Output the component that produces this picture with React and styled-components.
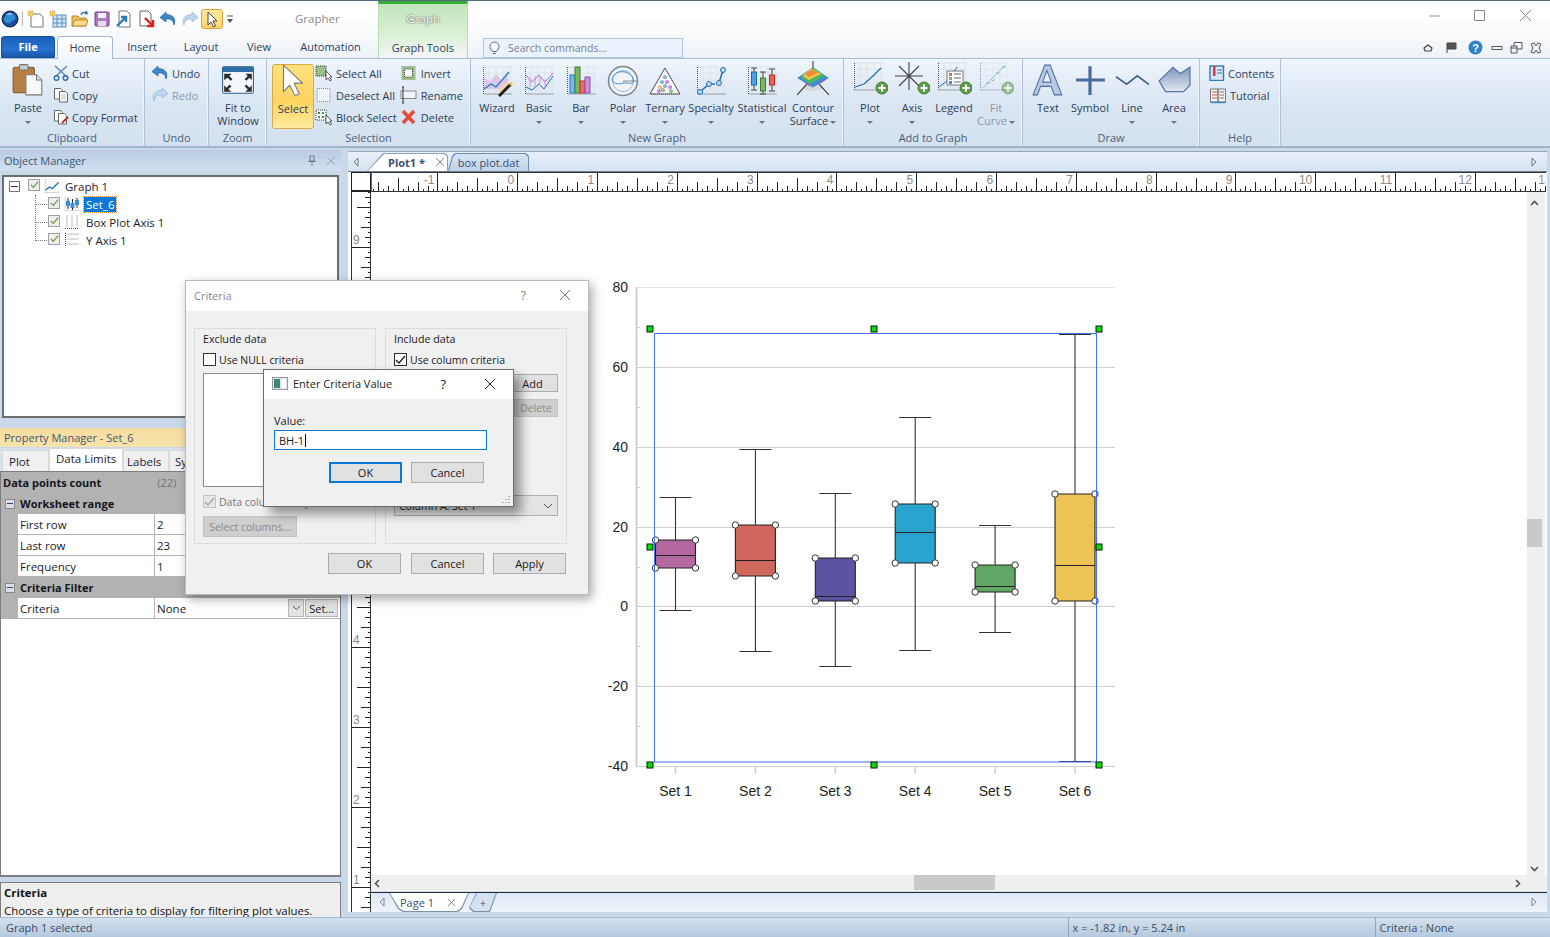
import React from 'react';
import styled, { createGlobalStyle } from 'styled-components';

const GlobalStyle = createGlobalStyle`
  html, body { margin: 0; padding: 0; background: #25343f; }
  body { font-family: "Open Sans", "Noto Sans", sans-serif; font-size: 11px; color: #2c3e58; }
  * { box-sizing: border-box; }
  svg { display: block; flex: none; }
`;

const Page = styled.div`
  width: 1550px;
  height: 937px;
  display: flex;
  flex-direction: column;
  overflow: hidden;
  position: relative;
  background: #c9d9ea;
  border-top: 1px solid #54697a;
`;

/* ---------- header ---------- */
const Header = styled.div`
  display: grid;
  grid-template-columns: 378px 90px 1fr;
  grid-template-rows: 36px 21px;
  background: linear-gradient(#fff 0, #fff 16px, #eef2f7 57px);
`;
const TitleLeft = styled.div`
  display: flex;
  align-items: center;
  padding-left: 2px;
`;
const QatSlot = styled.div`
  width: ${p => p.$w || 22}px;
  height: 20px;
  flex: none;
  display: flex;
  align-items: center;
  justify-content: center;
  border-radius: 3px;
  ${p => p.$on && 'background: linear-gradient(#ffe9a0, #fdd36b); border: 1px solid #d6a23c;'}
`;
const QatSep = styled.div`
  width: 1px;
  height: 14px;
  background: #b5b5b5;
  margin: 0 2px 0 4px;
`;
const AppTitle = styled.div`
  margin: -2px 0 0 58px;
  color: #8c8c8c;
  font-size: 11.5px;
`;
const ContextTab = styled.div`
  grid-row: 1 / span 2;
  grid-column: 2;
  border-top: 3px solid #39ab39;
  border-left: 1px solid #b9dcb5;
  border-right: 1px solid #b9dcb5;
  background: linear-gradient(#bfe6ba, #d8efd3 50%, #f3f6f6 100%);
  display: flex;
  flex-direction: column;
  align-items: center;
`;
const ContextTitle = styled.div`
  margin-top: 7px;
  color: #fff;
  text-shadow: 0 0 2px #555, 0 0 1px #777;
  font-size: 11.5px;
`;
const ContextName = styled.div`
  margin-top: 14px;
  color: #2c3e58;
  font-size: 11px;
`;
const WinControls = styled.div`
  grid-row: 1;
  grid-column: 3;
  display: flex;
  justify-content: flex-end;
  align-items: center;
  padding-right: 18.5px;
  gap: 32.5px;
  margin-top: -8px;
`;
const TabsRow = styled.div`
  grid-row: 2;
  grid-column: 1;
  display: flex;
  align-items: flex-end;
  padding-left: 1px;
`;
const FileTab = styled.div`
  width: 54px;
  height: 22px;
  flex: none;
  margin-right: 2px;
  padding-bottom: 1px;
  color: #fff;
  font-weight: 700;
  display: flex;
  align-items: center;
  justify-content: center;
  border-radius: 3px 3px 0 0;
  background: linear-gradient(#1a5fb8, #2573d2 60%, #1c56a8);
  border: 1px solid #1a4f9c;
`;
const RibbonTab = styled.div`
  height: 22px;
  flex: none;
  padding: 0 0 1px 0;
  width: ${p => p.$w}px;
  display: flex;
  align-items: center;
  justify-content: center;
  color: #2c3e58;
  font-size: 11px;
  ${p => p.$active && `
    background: linear-gradient(#fff, #f0f6fc);
    border: 1px solid #a4bad2;
    border-bottom: none;
    border-radius: 3px 3px 0 0;
    position: relative;
    top: 1px;
    height: 23px;
  `}
`;
const HeadRight = styled.div`
  grid-row: 2;
  grid-column: 3;
  display: flex;
  align-items: center;
  padding-left: 15px;
`;
const SearchBox = styled.div`
  width: 200px;
  height: 20px;
  margin-top: 1px;
  background: #eaf3fb;
  border: 1px solid #b4c8dd;
  display: flex;
  align-items: center;
  gap: 7px;
  padding-left: 4px;
  color: #77818e;
  font-size: 10.5px;
`;
const HelpIcons = styled.div`
  margin-left: auto;
  display: flex;
  align-items: center;
  padding-right: 8px;
`;
const Spacer = styled.span`
  width: ${p => p.$w}px;
  flex: none;
`;

/* ---------- ribbon ---------- */
const Ribbon = styled.div`
  height: 90px;
  display: flex;
  background: linear-gradient(#eff5fc, #d9e5f2 55%, #d4e1ef);
  border-top: 1px solid #a6bdd4;
  border-bottom: 2px solid #9fb5cc;
`;
const Group = styled.div`
  width: ${p => p.$w}px;
  flex: none;
  display: flex;
  flex-direction: column;
  border-right: 1px solid #aec2d8;
  box-shadow: inset -1px 0 0 #eef4fa;
`;
const GroupBody = styled.div`
  flex: 1;
  display: flex;
  padding: 5px 0 0 ${p => p.$pl || 4}px;
  gap: ${p => p.$gap || 0}px;
`;
const GroupLabel = styled.div`
  height: 17px;
  text-align: center;
  color: #4a5f7c;
  font-size: 11px;
  line-height: 17px;
`;
const LargeBtn = styled.div`
  width: ${p => p.$w || 42}px;
  height: 65px;
  flex: none;
  display: flex;
  flex-direction: column;
  align-items: center;
  color: ${p => p.$off ? '#8b99ab' : '#2c3e58'};
  line-height: 13px;
  text-align: center;
  white-space: nowrap;
  border-radius: 3px;
  ${p => p.$on && `
    background: linear-gradient(#ffe27f, #fdd35f 55%, #ffeb9d);
    border: 1px solid #d9aa45;
  `}
`;
const LargeIcon = styled.div`
  height: 33px;
  margin-bottom: 4px;
  display: flex;
  align-items: flex-end;
  justify-content: center;
`;
const Caret = styled.span`
  display: inline-block;
  width: 0;
  height: 0;
  vertical-align: middle;
  margin-left: ${p => p.$inline ? 2 : 0}px;
  border-left: 3px solid transparent;
  border-right: 3px solid transparent;
  border-top: 3px solid #69737f;
`;
const SmallCol = styled.div`
  display: flex;
  flex-direction: column;
  margin: -2px 0 0 ${p => p.$ml || 0}px;
`;
const SmallBtn = styled.div`
  height: 22px;
  display: flex;
  align-items: center;
  gap: 3px;
  white-space: nowrap;
  color: ${p => p.$off ? '#8b99ab' : '#2c3e58'};
  font-size: 11px;
`;

/* ---------- main ---------- */
const Main = styled.div`
  flex: 1;
  min-height: 0;
  display: flex;
`;
const LeftPanel = styled.div`
  width: 341px;
  flex: none;
  display: flex;
  flex-direction: column;
  padding-top: 2px;
`;
const PanelHeader = styled.div`
  height: ${p => p.$yellow ? 19 : 21}px;
  flex: none;
  display: flex;
  align-items: center;
  padding: 0 4px;
  color: #43566e;
  font-size: 11px;
  background: ${p => p.$yellow
    ? 'linear-gradient(#f4dd9f, #f8e3ae)'
    : 'linear-gradient(#b9cce4, #d2e0f1)'};
`;
const PanelTools = styled.div`
  margin-left: auto;
  display: flex;
  align-items: center;
  gap: 9px;
  padding-right: 1px;
`;
const TreeBox = styled.div`
  height: 243px;
  flex: none;
  margin: 4px 0 10px 2px;
  width: 337px;
  background: #fff;
  border: 2px solid #6d6d6d;
  padding: 0 0 0 5px;
  font-size: 11.5px;
  color: #1c1c28;
`;
const TreeRow = styled.div`
  position: relative;
  height: 18px;
  display: flex;
  align-items: center;
  gap: 4px;
`;
const TreeChildren = styled.div`
  margin-left: 26px;
  padding-left: 12px;
  border-left: 1px dotted #777;
  height: 46px;
  margin-bottom: 8px;
  & > ${TreeRow}::before {
    content: '';
    position: absolute;
    left: -12px;
    top: 9px;
    width: 11px;
    border-top: 1px dotted #777;
  }
`;
const Expander = styled.div`
  width: 11px;
  height: 11px;
  margin-right: 4px;
  border: 1px solid #777;
  position: relative;
  &::after {
    content: '';
    position: absolute;
    left: 1px;
    right: 1px;
    top: 4px;
    border-top: 1px solid #333;
  }
`;
const TreeCheck = styled.div`
  width: 12px;
  height: 12px;
  margin-top: -3px;
  border: 1px solid #a1a1a1;
  background: #eee;
  display: flex;
  align-items: center;
  justify-content: center;
`;
const TreeLabel = styled.span`
  padding: 0 2px;
  margin-left: ${p => p.$ml || 0}px;
  ${p => p.$sel && 'background: #0a78d7; color: #fff; outline: 1px dotted #d58a20;'}
`;
const PropTabs = styled.div`
  height: 23px;
  flex: none;
  display: flex;
  align-items: flex-end;
  padding: 0 0 0 2px;
  margin-top: 1px;
  background: #d5e2f0;
`;
const PropTab = styled.div`
  height: ${p => p.$active ? 23 : 21}px;
  width: ${p => p.$w}px;
  flex: none;
  display: flex;
  align-items: ${p => p.$active ? 'flex-start' : 'center'};
  padding: ${p => p.$active ? 2 : 0}px 0 0 ${p => p.$pl}px;
  font-size: 11.5px;
  color: #1b2230;
  background: ${p => p.$active ? '#fff' : '#f0f0f0'};
  border: 1px solid #dadada;
  border-bottom: none;
`;
const PropGrid = styled.div`
  flex: 1;
  min-height: 0;
  background: #fff;
  border: 1px solid #7d7d7d;
  border-top-width: 1px;
  border-bottom-width: 2px;
  font-size: 11.5px;
  color: #1b1b24;
`;
const PropRow = styled.div`
  height: 21px;
  display: grid;
  grid-template-columns: 16px 136px 1fr;
  gap: 1px;
  background: #b2b2b2;
  padding-bottom: 1px;
`;
const PropHead = styled.div`
  height: 21px;
  display: flex;
  align-items: center;
  gap: 5px;
  padding-left: ${p => p.$pl ?? 4}px;
  background: #b2b2b2;
  font-weight: 700;
  color: #15151c;
  font-size: 11px;
`;
const HeadCount = styled.span`
  font-weight: 400;
  color: #747474;
  margin-left: 51px;
`;
const Minus = styled.span`
  width: 10px;
  height: 10px;
  border: 1px solid #888;
  background: #d8dfe8;
  position: relative;
  &::after {
    content: '';
    position: absolute;
    left: 1px;
    right: 1px;
    top: 3px;
    border-top: 1px solid #33435e;
  }
`;
const PropCell = styled.div`
  background: #fff;
  display: flex;
  align-items: center;
  padding-left: 2px;
`;
const Gutter = styled.div`
  background: #b2b2b2;
`;
const CellButton = styled.div`
  height: 18px;
  width: ${p => p.$w}px;
  flex: none;
  margin-left: ${p => p.$ml || 0}px;
  background: #e3e3e3;
  border: 1px solid #b8b8b8;
  display: flex;
  align-items: center;
  justify-content: center;
  font-size: 11px;
`;
const DescBox = styled.div`
  height: 35px;
  flex: none;
  margin-top: 5px;
  overflow: hidden;
  background: #efefef;
  border-top: 1px solid #7d7d7d;
  border-left: 1px solid #7d7d7d;
  border-right: 1px solid #7d7d7d;
  padding: 1px 3px;
  font-size: 11.4px;
  line-height: 18px;
  color: #111;
`;
const DescTitle = styled.div`
  font-weight: 700;
`;

/* ---------- workspace ---------- */
const Workspace = styled.div`
  flex: 1;
  min-width: 0;
  display: flex;
  flex-direction: column;
  margin: 3px 2px 5px 7px;
  background: #fff;
  border-top: 1px solid #93a9c2;
  border-right: 1px solid #d8d8d8;
`;
const DocTabs = styled.div`
  height: 20px;
  flex: none;
  display: flex;
  align-items: flex-end;
  padding-left: 1px;
  background: linear-gradient(#e8f0f9, #d6e3f1);
  border-bottom: 1px solid #6f8093;
`;
const ArrowBtn = styled.div`
  width: ${p => p.$w || 14}px;
  height: 18px;
  flex: none;
  display: flex;
  align-items: center;
  justify-content: center;
  margin-left: ${p => p.$auto ? 'auto' : 0};
  margin-right: ${p => p.$mr || 0}px;
`;
const Shaped = styled.div`
  position: relative;
  width: ${p => p.$w}px;
  height: ${p => p.$h || 18}px;
  flex: none;
  margin-left: ${p => p.$ml || 0}px;
  padding: 0 ${p => p.$pr || 0}px 0 ${p => p.$pl || 0}px;
  display: flex;
  align-items: center;
  justify-content: center;
  gap: ${p => p.$gap || 10}px;
  background: ${p => p.$line || '#8da4bd'};
  clip-path: ${p => p.$clip};
  color: #3d4f70;
  font-weight: ${p => p.$bold ? 700 : 400};
  font-size: 11px;
  &::before {
    content: '';
    position: absolute;
    inset: ${p => p.$inset || '1px 1px 0 1px'};
    background: ${p => p.$fill};
    clip-path: ${p => p.$clip};
  }
  & > * { position: relative; }
`;
const RulerRow = styled.div`
  height: 20px;
  flex: none;
  display: flex;
  padding-left: 3px;
`;
const RulerCorner = styled.div`
  width: 20px;
  height: 20px;
  flex: none;
  border: 1px solid #222;
  border-bottom-width: 2px;
`;
const CanvasRow = styled.div`
  flex: 1;
  min-height: 0;
  display: flex;
  padding-left: 3px;
`;
const CanvasCol = styled.div`
  flex: 1;
  min-width: 0;
  display: flex;
  flex-direction: column;
`;
const CanvasTop = styled.div`
  height: 683px;
  flex: none;
  display: flex;
`;
const VScroll = styled.div`
  width: 18px;
  background: #efefef;
  display: flex;
  flex-direction: column;
  align-items: flex-start;
  padding-top: 6px;
`;
const VThumb = styled.div`
  width: 15px;
  height: 28px;
  flex: none;
  margin: 311px 0 317px;
  background: #c9c9c9;
`;
const ScrollArrow = styled.div`
  width: 15px;
  height: 10px;
  flex: none;
  display: flex;
  align-items: center;
  justify-content: center;
`;
const HScroll = styled.div`
  height: 17px;
  flex: none;
  background: #efefef;
  display: flex;
  align-items: center;
  padding-left: 3px;
  border-bottom: 1px solid #ddd;
`;
const HThumb = styled.div`
  width: 81px;
  height: 15px;
  flex: none;
  margin-left: 534px;
  margin-right: 520px;
  align-self: flex-start;
  background: #c9c9c9;
`;
const PageTabs = styled.div`
  height: 20px;
  flex: none;
  display: flex;
  align-items: flex-start;
  padding-left: 3px;
  border-top: 1px solid #172a44;
  background: linear-gradient(#dfe9f5, #eef4fb);
`;

/* ---------- status ---------- */
const StatusBar = styled.div`
  height: 20px;
  flex: none;
  display: flex;
  align-items: center;
  padding-left: 6px;
  color: #3a4c66;
  font-size: 11px;
  background: linear-gradient(#d3e0ef, #b5c9de);
  border-top: 1px solid #a4b9d0;
`;
const StatusCell = styled.div`
  height: 100%;
  width: ${p => p.$w}px;
  margin-left: ${p => p.$ml || 0}px;
  display: flex;
  align-items: center;
  padding-left: 4px;
  border-left: 1px solid #94a9c0;
`;

/* ---------- dialogs ---------- */
const Dialog = styled.div`
  position: absolute;
  left: ${p => p.$x}px;
  top: ${p => p.$y}px;
  width: ${p => p.$w}px;
  height: ${p => p.$h}px;
  background: #f0f0f0;
  border: 1px solid ${p => p.$dark ? '#6d6d6d' : '#b9b9b9'};
  box-shadow: ${p => p.$dark ? '7px 7px 10px rgba(0,0,0,.4)' : '3px 4px 10px rgba(0,0,0,.35)'};
  font-size: 11px;
  color: #1a1a1a;
  display: flex;
  flex-direction: column;
`;
const DlgTitle = styled.div`
  height: ${p => p.$h}px;
  flex: none;
  background: #fff;
  display: flex;
  align-items: center;
  padding: 0 ${p => p.$pr}px 2px 8px;
  gap: 5px;
  font-size: 11px;
  color: ${p => p.$dim ? '#8a8a8a' : '#1c1c28'};
`;
const DlgHelp = styled.span`
  margin-left: auto;
  font-size: 13px;
  color: ${p => p.$dim ? '#8a8a8a' : '#222'};
  margin-right: ${p => p.$mr}px;
`;
const GroupGrid = styled.div`
  display: grid;
  grid-template-columns: 182px 182px;
  gap: 9px;
  padding: 17px 0 0 8px;
`;
const GroupBox = styled.div`
  height: 216px;
  border: 1px solid #dcdcdc;
  padding: 2px 8px;
  display: flex;
  flex-direction: column;
`;
const GroupTitle = styled.div`
  height: 17px;
  line-height: 17px;
  font-size: 10.7px;
`;
const CheckRow = styled.div`
  height: 17px;
  flex: none;
  margin-top: ${p => p.$mt || 3}px;
  display: flex;
  align-items: center;
  gap: 3px;
  font-size: 10.5px;
  color: ${p => p.$off ? '#777' : '#1a1a1a'};
`;
const Box13 = styled.div`
  width: 13px;
  height: 13px;
  flex: none;
  border: 1px solid ${p => p.$off ? '#c4c4c4' : '#333'};
  background: ${p => p.$off ? '#e6e6e6' : '#fff'};
  display: flex;
  align-items: center;
  justify-content: center;
`;
const ListBox = styled.div`
  height: 114px;
  flex: none;
  margin-top: 5px;
  background: #fff;
  border: 1px solid #8a8a8a;
`;
const DlgButton = styled.div`
  width: ${p => p.$w || 73}px;
  height: ${p => p.$h || 21}px;
  flex: none;
  background: ${p => p.$off ? '#cfcfcf' : '#e1e1e1'};
  border: ${p => p.$focus ? '2px solid #0a78d7' : `1px solid ${p.$off ? '#c4c4c4' : '#adadad'}`};
  color: ${p => p.$off ? '#8a8a8a' : '#1a1a1a'};
  display: flex;
  align-items: center;
  justify-content: center;
  font-size: ${p => p.$small ? 10.5 : 11}px;
  margin-top: ${p => p.$mt || 0}px;
  margin-left: ${p => p.$ml || 0}px;
`;
const DlgFooter = styled.div`
  display: flex;
  justify-content: flex-end;
  gap: ${p => p.$gap || 10}px;
  padding: ${p => p.$pad};
`;
const IncludeButtons = styled.div`
  display: flex;
  flex-direction: column;
  align-items: flex-end;
  margin-top: 6px;
  gap: 7px;
`;
const ComboBox = styled.div`
  height: 21px;
  flex: none;
  margin-top: auto;
  margin-bottom: 25px;
  background: #e3e3e3;
  border: 1px solid #b0b0b0;
  display: flex;
  align-items: center;
  justify-content: space-between;
  padding: 0 4px;
  font-size: 10.5px;
`;
const ValueBody = styled.div`
  flex: 1;
  padding: 14px 26px 0 10px;
  position: relative;
`;
const ValueInput = styled.div`
  height: 20px;
  margin-top: 2px;
  background: #fff;
  border: 1px solid #0a78d7;
  padding-left: 4px;
  font-size: 11px;
  display: flex;
  align-items: center;
`;
const TextCaret = styled.span`
  width: 1px;
  height: 13px;
  background: #111;
  margin-left: 1px;
`;
const Grip = styled.div`
  position: absolute;
  right: 2px;
  bottom: 2px;
`;

/* ---------- icons ---------- */
const Svg = ({ s = 32, v = 32, children }) => (
  <svg width={s} height={s} viewBox={`0 0 ${v} ${v}`}>{children}</svg>
);

const GridBase = () => (
  <g fill="none">
    {[8, 15, 22, 29].map(n => <path key={n} d={`M${n} 2V28`} stroke="#dfe2e6" />)}
    {[2, 8, 15, 22].map(n => <path key={n} d={`M3 ${n}H31`} stroke="#dfe2e6" />)}
    <path d="M2.5 2V29H31" stroke="#555" strokeDasharray="1 1" />
  </g>
);
const PlusBadge = ({ off }) => (
  <g opacity={off ? 0.55 : 1}>
    <circle cx="30" cy="27" r="6" fill="#5f9d4a" stroke="#3f7a33" />
    <path d="M30 23.5v7M26.5 27h7" stroke="#fff" strokeWidth="2" />
  </g>
);

const icons = {
  paste: <Svg s={34} v={32}>
    <rect x="2" y="4" width="20" height="24" rx="2" fill="#b57f45" stroke="#80582e" />
    <rect x="8" y="1.5" width="8" height="5" rx="1" fill="#c9ccd2" stroke="#777" />
    <path d="M14 11h10l5 5v14H14z" fill="#f7f7f7" stroke="#777" />
    <path d="M24 11v5h5" fill="#ddd" stroke="#777" />
  </Svg>,
  fit: <Svg s={34} v={32}>
    <rect x="1.5" y="3.5" width="29" height="25" rx="1.5" fill="#f4f7fb" stroke="#2b5f90" />
    <rect x="1.5" y="3.5" width="29" height="5" fill="#2e6ea6" />
    <path d="M3 10h7l-2.2 2.2 3 3-1.6 1.6-3-3L3 16zM29 10v6l-2.2-2.2-3 3-1.6-1.6 3-3L23 10zM3 27v-6l2.2 2.2 3-3 1.6 1.6-3 3L10 27zM29 27h-6l2.2-2.2-3-3 1.6-1.6 3 3L29 21z" fill="#2c2c2c" />
  </Svg>,
  arrow: <Svg s={34} v={32}>
    <path d="M7 1v25l6-6 5 10 4-2-5-10h8z" fill="#fff" stroke="#777" strokeLinejoin="round" />
  </Svg>,
  wizard: <Svg>
    <GridBase />
    <path d="M3 12l6 5 6-8 6 7 6-8v16H3z" fill="#d9b6e6" opacity=".7" />
    <path d="M3 24l7-5 5 3 13-15" fill="none" stroke="#1f77b4" strokeWidth="1.2" />
    <path d="M16 26l10 -10 4 6-8 6z" fill="#f7d68a" opacity=".7" />
    <path d="M18 31l12-12" stroke="#222" strokeWidth="3" />
    <path d="M29 20l2-2" stroke="#f4c13e" strokeWidth="3" />
  </Svg>,
  basic: <Svg>
    <GridBase />
    <path d="M3 10l6 7 7-7 6 7 8-9" fill="none" stroke="#b56cd0" />
    <path d="M3 22l6 3 7-6 5 5 9-13" fill="none" stroke="#1f6fb0" />
    <path d="M7 13v9M12 11v11M17 11v9M22 15v8" stroke="#c89bdc" />
  </Svg>,
  bar: <Svg>
    <GridBase />
    <rect x="5" y="10" width="5" height="18" fill="#75b9ec" stroke="#2b7bc0" />
    <rect x="10" y="2" width="5" height="26" fill="#7bb661" stroke="#477e2f" />
    <rect x="15" y="16" width="5" height="12" fill="#ee6b66" stroke="#c8332f" />
    <rect x="20" y="12" width="5" height="16" fill="#c792e0" stroke="#8d4cb3" />
  </Svg>,
  polar: <Svg>
    <circle cx="16" cy="16" r="14.5" fill="#f2f5f8" stroke="#79858f" strokeWidth="1.5" />
    <circle cx="16" cy="16" r="10.5" fill="none" stroke="#9bb7cf" />
    <path d="M16 16H30" stroke="#888" />
    <path d="M5 15c1-8 9-9 13-8s9 4 8 10c-2 3-6 0-10 1s-8 2-11-3z" fill="none" stroke="#3d8fd0" />
  </Svg>,
  ternary: <Svg>
    <path d="M16 3L31 29H1z" fill="#fafafa" stroke="#6c6c6c" />
    <path d="M16 3L31 29H1z" fill="none" stroke="#555" strokeDasharray="1 1" />
    {[['#3d8fd0', 16, 12], ['#3d8fd0', 13, 17], ['#a854c5', 18, 17], ['#e0a23a', 11, 22], ['#3d8fd0', 16, 21], ['#a854c5', 21, 22], ['#58a04a', 14, 25], ['#a854c5', 10, 26], ['#58a04a', 22, 26]].map(([c, x, y]) => (
      <circle key={`${x}${y}`} cx={x} cy={y} r="1.3" fill="none" stroke={c} strokeWidth="1.1" />
    ))}
  </Svg>,
  specialty: <Svg>
    <GridBase />
    <path d="M5 27L14 19H20M24 18L28 5" fill="none" stroke="#1f6fb0" strokeWidth="1.5" />
    <circle cx="5" cy="27" r="2.5" fill="#bcd9ef" stroke="#1f6fb0" />
    <circle cx="14" cy="19" r="2.5" fill="#bcd9ef" stroke="#1f6fb0" />
    <circle cx="24" cy="18" r="2.5" fill="#bcd9ef" stroke="#1f6fb0" />
    <circle cx="28" cy="5" r="2.5" fill="#bcd9ef" stroke="#1f6fb0" />
  </Svg>,
  statistical: <Svg>
    <GridBase />
    <path d="M5 3h6M8 3v22M5 25h6M14 7h6M17 7v22M14 29h6M23 4h6M26 4v22M23 26h6" stroke="#444" fill="none" />
    <rect x="5.5" y="7" width="5" height="13" fill="#4ea3e0" stroke="#1d6aa8" />
    <rect x="14.5" y="13" width="5" height="13" fill="#7bb661" stroke="#3f7a33" />
    <rect x="23.5" y="10" width="5" height="10" fill="#ee5f5a" stroke="#b92a26" />
  </Svg>,
  contour: <Svg s={36} v={34}>
    <ellipse cx="17" cy="25" rx="10" ry="3.5" fill="#d9d9d9" />
    <path d="M17 0V10M2 32L13 20M32 32L21 20" stroke="#333" fill="none" />
    <path d="M17 6L32 16L17 25L2 16z" fill="#3d8fd0" />
    <path d="M17 6L28 14L14 22L5 15z" fill="#4cb56a" />
    <path d="M15 7L25 12L13 18L7 14z" fill="#f3c63f" />
    <path d="M15 8L22 11L13 15L10 12z" fill="#ef8a3a" />
    <path d="M25 19l6-3-9 7zM14 24l-7-5 7 3z" fill="#b04fc4" />
  </Svg>,
  plot: <Svg s={36} v={36}>
    <GridBase />
    <path d="M3 26l9-3 9-8 8-8" fill="none" stroke="#1f6fb0" strokeWidth="1.3" />
    <PlusBadge />
  </Svg>,
  axis: <Svg s={36} v={36}>
    <path d="M15 1V29M1 15H29M5 5L25 25M25 5L5 25" stroke="#444" strokeWidth="1.1" fill="none" />
    <PlusBadge />
  </Svg>,
  legend: <Svg s={36} v={36}>
    <GridBase />
    <path d="M3 26l8-6 10-14" fill="none" stroke="#1f6fb0" />
    <rect x="11" y="10" width="16" height="14" fill="#fff" stroke="#777" />
    <path d="M18 13h7M18 17h7M18 21h7" stroke="#666" />
    <rect x="13" y="12" width="3" height="3" fill="#d66" />
    <rect x="13" y="16" width="3" height="3" fill="#7b6" />
    <rect x="13" y="20" width="3" height="3" fill="#48c" />
    <PlusBadge />
  </Svg>,
  fitcurve: <Svg s={36} v={36}>
    <g opacity=".6">
      <GridBase />
      <path d="M5 27L27 4" stroke="#5d9fd4" />
      <path d="M8 21l2 2M13 18l2 2M18 11l2 2M24 5l2 2M10 23l2-2M15 20l2-2M20 13l2-2M26 7l2-2" stroke="#6aa85a" />
    </g>
    <PlusBadge off />
  </Svg>,
  text: <Svg s={34} v={32}>
    <path d="M2 30L13 2h5l11 28h-7l-3-8H9l-3 8z" fill="#b9c9e0" stroke="#4a6ea6" />
    <path d="M11 18h8L15 7z" fill="#eff3f9" stroke="#4a6ea6" />
  </Svg>,
  symbol: <Svg s={34} v={32}><path d="M16 3V30M3 16H30" stroke="#47699e" strokeWidth="3" /></Svg>,
  line: <Svg s={34} v={32}><path d="M1 13L11 20L21 12L33 21" fill="none" stroke="#3f5f8e" strokeWidth="1.6" /></Svg>,
  area: <Svg s={34} v={32}>
    <defs><linearGradient id="areaG" x1="0" y1="0" x2="0" y2="1"><stop offset="0" stopColor="#7f97bd" /><stop offset="1" stopColor="#e2e8f1" /></linearGradient></defs>
    <path d="M2 17L15 4L22 10L31 4V21L25 27H8z" fill="url(#areaG)" stroke="#5878a8" strokeWidth="1.2" />
  </Svg>,
  cut: <Svg s={16} v={16}>
    <path d="M2 1l11 10M14 1L3 11" stroke="#6a8bb2" strokeWidth="1.6" />
    <circle cx="3.5" cy="13" r="2.3" fill="none" stroke="#2e6fb0" strokeWidth="1.5" />
    <circle cx="12.5" cy="13" r="2.3" fill="none" stroke="#2e6fb0" strokeWidth="1.5" />
  </Svg>,
  copy: <Svg s={16} v={16}>
    <path d="M1.5 1.5h6l2 2V12h-8z" fill="#fff" stroke="#666" />
    <path d="M6.5 4.5h6l2 2V15h-8z" fill="#fff" stroke="#666" />
    <path d="M8 8h5M8 10h5M8 12h5" stroke="#bbb" />
  </Svg>,
  format: <Svg s={16} v={16}>
    <path d="M1.5 1.5h6l2 2V12h-8z" fill="#fff" stroke="#666" />
    <path d="M5.5 4.5h6l2 2V15h-8z" fill="#fff" stroke="#666" />
    <path d="M9 14l6-6" stroke="#a33" strokeWidth="2" />
  </Svg>,
  undo: <Svg s={18} v={18}>
    <path d="M7 2L1 7.5L7 12V9c4-.5 7 .5 8 6 2.5-6-1-10.5-8-10.5z" fill="#3f87c6" stroke="#1f5c96" strokeWidth=".7" />
  </Svg>,
  redo: <Svg s={18} v={18}>
    <path d="M11 2l6 5.5L11 12V9c-4-.5-7 .5-8 6C.5 9 4 4.5 11 4.5z" fill="#bcd9ef" stroke="#8fb5d6" strokeWidth=".7" />
  </Svg>,
  selAll: <Svg s={18} v={18}>
    <rect x="1" y="2" width="10" height="10" fill="#9cc08d" stroke="#333" strokeDasharray="1 1" />
    <path d="M11 7v9l2-2 2 3 1.5-1-2-3h2.5z" fill="#fff" stroke="#333" strokeWidth=".8" />
  </Svg>,
  deselAll: <Svg s={18} v={18}><rect x="2" y="2.5" width="13" height="13" fill="#f2f5f8" stroke="#888" strokeDasharray="1 1" /></Svg>,
  block: <Svg s={18} v={18}>
    <rect x="1" y="2" width="10" height="10" fill="#fff" stroke="#333" strokeDasharray="1 1" />
    <path d="M3 4h2v2H3zM7 4h2v2H7zM3 8h2v2H3zM7 8h2v2H7z" fill="#3b9a3b" />
    <path d="M11 7v9l2-2 2 3 1.5-1-2-3h2.5z" fill="#fff" stroke="#333" strokeWidth=".8" />
  </Svg>,
  invert: <Svg s={18} v={18}>
    <rect x="1.5" y="2" width="14" height="14" fill="#9cc08d" />
    <rect x="4.5" y="5" width="8" height="8" fill="#fff" stroke="#333" strokeDasharray="1 1" />
  </Svg>,
  rename: <Svg s={18} v={18}>
    <rect x="1" y="5" width="15" height="7.5" fill="#f1f4f8" stroke="#888" />
    <path d="M2 1h2M2 17h2M3 1V17" stroke="#333" />
  </Svg>,
  del: <Svg s={18} v={18}><path d="M3 3l11 12M14 3L3 15" stroke="#e64a3a" strokeWidth="3.4" /></Svg>,
  contents: <Svg s={16} v={16}>
    <rect x="1" y="1" width="13.5" height="14.5" fill="#d7e7f6" stroke="#2e79b8" strokeWidth="1.4" />
    <rect x="4" y="1" width="2.5" height="10" fill="#dd3b33" />
    <path d="M8 5h5M8 8h5" stroke="#2e79b8" />
  </Svg>,
  tutorial: <Svg s={18} v={18}>
    <path d="M1.5 3h7.5v13H1.5zM9 3h7.5v13H9z" fill="#f4f4f2" stroke="#777" />
    <path d="M3 6h5M3 9h5M3 12h5" stroke="#c55" />
    <path d="M10.5 6h4.5M10.5 9h4.5M10.5 12h4.5" stroke="#777" />
    <path d="M1.5 16.5h15" stroke="#3a82c0" strokeWidth="1.4" />
  </Svg>,
};

const qat = {
  logo: <Svg s={18} v={18}>
    <circle cx="9" cy="9" r="8" fill="#1b4da3" stroke="#123" />
    <path d="M3 9c1-4 5-6 9-5 2 1 3 3 2 5-2 2-3 2-5 4-3 1-6-1-6-4z" fill="#2e8fd8" />
    <path d="M5 5c2-2 5-2 7-1-2 0-5 1-7 1z" fill="#dff" />
  </Svg>,
  newPlot: <Svg s={18} v={18}>
    <path d="M4 4h9l3 3v10H4z" fill="#fff" stroke="#777" />
    <path d="M1 1h5v5H1z" fill="#f4d13e" stroke="#caa" strokeDasharray="1 1" />
  </Svg>,
  newSheet: <Svg s={18} v={18}>
    <rect x="4" y="5" width="13" height="12" fill="#d3e6f8" stroke="#5b8ec0" />
    <path d="M4 9h13M4 13h13M8 5v12M13 5v12" stroke="#5b8ec0" />
    <path d="M1 1h5v5H1z" fill="#f4d13e" stroke="#caa" strokeDasharray="1 1" />
  </Svg>,
  open: <Svg s={18} v={18}>
    <path d="M1 6h6l1 2h7v8H1z" fill="#f1c15e" stroke="#b98a2b" />
    <path d="M1 16l3-6h13l-2 6z" fill="#fbdc8e" stroke="#b98a2b" />
    <path d="M10 5c1-3 4-3 6-2l-1-2M16 3l-2 1" fill="none" stroke="#2e79b8" strokeWidth="1.4" />
  </Svg>,
  save: <Svg s={18} v={18}>
    <rect x="2" y="2" width="14" height="14" rx="1" fill="#a97cc0" stroke="#6c3f86" />
    <rect x="5" y="3" width="8" height="5" fill="#f2edf7" />
    <rect x="5" y="11" width="8" height="5" fill="#e8dcef" />
  </Svg>,
  export: <Svg s={18} v={18}>
    <path d="M4 1h8l3 3v13H4z" fill="#fff" stroke="#777" />
    <path d="M2 16l8-8M6 7h5v5" fill="none" stroke="#2e79b8" strokeWidth="2.4" />
  </Svg>,
  close: <Svg s={18} v={18}>
    <path d="M3 1h8l3 3v12H3z" fill="#fff" stroke="#666" />
    <path d="M8 8l8 8M16 10v6h-6" fill="none" stroke="#e02020" strokeWidth="2.4" />
  </Svg>,
  cursor: <Svg s={17} v={17}><path d="M4 1v13l3-3 2.5 5 2-1-2.5-5h4z" fill="#fff" stroke="#444" /></Svg>,
  more: <svg width="8" height="9" viewBox="0 0 8 9"><path d="M1 1h6" stroke="#555" /><path d="M1 4h6L4 8z" fill="#555" /></svg>,
};

const Glyph = ({ d, w = 12, h = 12, stroke = '#555', sw = 1, fill = 'none' }) => (
  <svg width={w} height={h} viewBox={`0 0 ${w} ${h}`}>
    <path d={d} stroke={stroke} strokeWidth={sw} fill={fill} />
  </svg>
);
const Check = ({ c = '#222', s = 11 }) => (
  <svg width={s} height={s} viewBox="0 0 11 11">
    <path d="M1 6l3 3 6-7" fill="none" stroke={c} strokeWidth="1.4" />
  </svg>
);

/* ---------- rulers ---------- */
const HRuler = () => {
  const inch = 79.8;
  const zero = 517.3 - 371;
  const ticks = [];
  for (let i = -32; i < 240; i++) {
    const x = Math.round(zero + i * inch / 16) + 0.5;
    if (x < 0 || x > 1175) continue;
    const h = i % 16 === 0 ? 19 : i % 8 === 0 ? 13 : i % 4 === 0 ? 9 : i % 2 === 0 ? 5 : 2;
    ticks.push(<path key={i} d={`M${x} 19V${19 - h}`} stroke="#222" />);
  }
  const labels = [];
  for (let n = -1; n <= 13; n++) {
    labels.push(
      <text key={n} x={zero + n * inch - 3} y="12" textAnchor="end" fontSize="12" fill="#8a8a8a" fontFamily="Liberation Sans, sans-serif">{n}</text>
    );
  }
  return (
    <svg width="1175" height="20">
      <path d="M0 19.5H1175M0 0.5H1175" stroke="#333" />
      {ticks}
      {labels}
      <path d="M0.5 0V19" stroke="#d23c30" />
    </svg>
  );
};

const VRuler = () => {
  const inch = 80;
  const base = 247 - 192;
  const ticks = [];
  for (let i = -16; i < 160; i++) {
    const y = Math.round(base + i * inch / 16) + 0.5;
    if (y < 0) continue;
    const h = i % 16 === 0 ? 19 : i % 8 === 0 ? 13 : i % 4 === 0 ? 9 : i % 2 === 0 ? 5 : 2;
    ticks.push(<path key={i} d={`M19 ${y}H${19 - h}`} stroke="#222" />);
  }
  const labels = [];
  for (let n = 9; n >= 1; n--) {
    labels.push(
      <text key={n} x="2" y={base + (9 - n) * inch - 3} fontSize="12" fill="#8a8a8a" fontFamily="Liberation Sans, sans-serif">{n}</text>
    );
  }
  return (
    <svg width="20" height="720">
      <path d="M0.5 0V720M19.5 0V720" stroke="#333" />
      {ticks}
      {labels}
    </svg>
  );
};

/* ---------- chart ---------- */
const boxes = [
  { name: 'Set 1', top: 497, q3: 540, med: 555, q1: 568, low: 610, color: '#b368a0' },
  { name: 'Set 2', top: 449, q3: 525, med: 560, q1: 576, low: 651, color: '#cf675c' },
  { name: 'Set 3', top: 493, q3: 558, med: 596, q1: 601, low: 666, color: '#5a54a2' },
  { name: 'Set 4', top: 417, q3: 504, med: 532, q1: 563, low: 650, color: '#2aa3ce' },
  { name: 'Set 5', top: 525, q3: 565, med: 586, q1: 592, low: 632, color: '#62a665' },
  { name: 'Set 6', top: 334, q3: 494, med: 565, q1: 601, low: 761, color: '#eec356' },
];
const handles = [[650, 329], [874, 329], [1099, 329], [650, 547], [1099, 547], [650, 765], [874, 765], [1099, 765]];
const yVals = [[80, 287], [60, 367], [40, 447], [20, 527], [0, 606], [-20, 686], [-40, 766]];

const Chart = () => (
  <svg width="1156" height="683" viewBox="371 192 1156 683" fontFamily="Liberation Sans, sans-serif" fontSize="14" fill="#222">
    {yVals.map(([v, y]) => (
      <g key={v}>
        <path d={`M636 ${y + 0.5}H1115`} stroke={v === 80 ? '#e2e2e2' : '#cfcfcf'} />
        <text x="628" y={y + 5} textAnchor="end">{v}</text>
      </g>
    ))}
    {[327, 407, 487, 567, 646, 726].map(y => <path key={y} d={`M636 ${y + 0.5}H640`} stroke="#cfcfcf" />)}
    <path d="M636.5 287V767" stroke="#cfcfcf" strokeWidth="2" />
    {boxes.map((b, i) => {
      const cx = 675.5 + i * 79.9;
      const xs = [cx - 20, cx + 20];
      return (
        <g key={b.name}>
          <path d={`M${cx} ${b.top}V${b.q3}M${cx} ${b.q1}V${b.low}M${cx - 16} ${b.top + 0.5}H${cx + 16}M${cx - 16} ${b.low + 0.5}H${cx + 16}`} stroke="#333" strokeWidth="1.1" fill="none" />
          <rect x={xs[0]} y={b.q3} width="40" height={b.q1 - b.q3} rx="2" fill={b.color} stroke="#222" strokeWidth="1.1" />
          <path d={`M${xs[0]} ${b.med + 0.5}H${xs[1]}`} stroke="#222" strokeWidth="1.2" />
          {xs.flatMap(x => [b.q3, b.q1].map(y => (
            <circle key={`${x}${y}`} cx={x} cy={y} r="3.2" fill="#fff" stroke="#333" />
          )))}
          <path d={`M${cx} 767V774`} stroke="#cfcfcf" strokeWidth="1.5" />
          <text x={cx} y="796" textAnchor="middle">{b.name}</text>
        </g>
      );
    })}
    <rect x="654.5" y="333.5" width="442" height="428.5" fill="none" stroke="#3f73e8" />
    {handles.map(([x, y]) => <rect key={`${x}${y}`} x={x - 3} y={y - 3} width="6" height="6" fill="#00e000" stroke="#111" />)}
  </svg>
);

/* ---------- data ---------- */
const newGraph = [
  ['wizard', 'Wizard', 42], ['basic', 'Basic', 42, 1], ['bar', 'Bar', 42, 1], ['polar', 'Polar', 42, 1],
  ['ternary', 'Ternary', 42, 1], ['specialty', 'Specialty', 50, 1], ['statistical', 'Statistical', 52, 1],
];
const addToGraph = [['plot', 'Plot', 1], ['axis', 'Axis', 1], ['legend', 'Legend', 0]];
const draw = [['text', 'Text', 0], ['symbol', 'Symbol', 0], ['line', 'Line', 1], ['area', 'Area', 1]];
const worksheetRows = [['First row', '2'], ['Last row', '23'], ['Frequency', '1']];

const Large = ({ icon, label, caret, w, on, off, line2, inlineCaret }) => (
  <LargeBtn $w={w} $on={on} $off={off}>
    <LargeIcon>{icons[icon]}</LargeIcon>
    <div>{label}</div>
    {line2 && <div>{line2}{inlineCaret && <Caret $inline />}</div>}
    {caret && <div><Caret /></div>}
  </LargeBtn>
);
const Small = ({ icon, label, off }) => (
  <SmallBtn $off={off}>{icons[icon]}{label}</SmallBtn>
);

const docClip = 'polygon(0 100%, 16px 0, calc(100% - 3px) 0, 100% 3px, 100% 100%)';
const dataClip = 'polygon(0 100%, 4px 3px, 7px 0, calc(100% - 3px) 0, 100% 3px, 100% 100%)';
const pageClip = 'polygon(0 0, 100% 0, calc(100% - 7px) calc(100% - 3px), calc(100% - 11px) 100%, 14px 100%, 9px calc(100% - 3px))';
const plusClip = 'polygon(7px 0, 100% 0, calc(100% - 7px) 100%, 4px 100%, 0 calc(100% - 4px))';

export default function App() {
  return (
    <Page>
      <GlobalStyle />
      <Header>
        <TitleLeft>
          <QatSlot $w={16}>{qat.logo}</QatSlot>
          <QatSep />
          <QatSlot>{qat.newPlot}</QatSlot>
          <QatSlot>{qat.newSheet}</QatSlot>
          <QatSlot>{qat.open}</QatSlot>
          <QatSlot>{qat.save}</QatSlot>
          <QatSlot>{qat.export}</QatSlot>
          <QatSlot>{qat.close}</QatSlot>
          <QatSlot>{icons.undo}</QatSlot>
          <QatSlot>{icons.redo}</QatSlot>
          <QatSlot $on>{qat.cursor}</QatSlot>
          <QatSlot $w={14}>{qat.more}</QatSlot>
          <AppTitle>Grapher</AppTitle>
        </TitleLeft>
        <ContextTab>
          <ContextTitle>Graph</ContextTitle>
          <ContextName>Graph Tools</ContextName>
        </ContextTab>
        <WinControls>
          <Glyph w={13} h={13} d="M1 7H12" stroke="#999" />
          <Glyph w={13} h={13} d="M1.5 1.5h10v10h-10z" stroke="#888" />
          <Glyph w={13} h={13} d="M1 1L12 12M12 1L1 12" stroke="#888" />
        </WinControls>
        <TabsRow>
          <FileTab>File</FileTab>
          <RibbonTab $active $w={56}>Home</RibbonTab>
          <RibbonTab $w={58}>Insert</RibbonTab>
          <RibbonTab $w={60}>Layout</RibbonTab>
          <RibbonTab $w={56}>View</RibbonTab>
          <RibbonTab $w={87}>Automation</RibbonTab>
        </TabsRow>
        <HeadRight>
          <SearchBox>
            <svg width="13" height="14" viewBox="0 0 13 14"><path d="M4.5 10.5C3 8.5 2 7.5 2 5.5a4.5 4.5 0 0 1 9 0c0 2-1 3-2.5 5zM5 12.5h3" fill="#f8fbfe" stroke="#666" /></svg>
            Search commands...
          </SearchBox>
          <HelpIcons>
            <Glyph w={10} h={10} d="M1 5l4-3 4 3-1 3H2z" stroke="#444" sw={1.2} />
            <Spacer $w={12} />
            <Glyph w={13} h={13} d="M2 12V2h9v6H2" stroke="#444" fill="#555" />
            <Spacer $w={10} />
            <svg width="15" height="15" viewBox="0 0 15 15">
              <circle cx="7.5" cy="7.5" r="7" fill="#2f80c4" />
              <text x="7.5" y="11.5" textAnchor="middle" fontSize="11" fontWeight="700" fill="#fff" fontFamily="Liberation Sans, sans-serif">?</text>
            </svg>
            <Spacer $w={8} />
            <Glyph w={12} h={12} d="M1 4.5h10v3h-10z" stroke="#555" />
            <Spacer $w={7} />
            <Glyph w={13} h={13} d="M1 5h6v7H1zM4 5V1.5h8V8H7M1 7h6" stroke="#555" />
            <Spacer $w={7} />
            <Glyph w={12} h={12} d="M1 2l3-1 2 3 2-3 3 1-2 4 2 4-3 1-2-3-2 3-3-1 2-4z" stroke="#555" />
          </HelpIcons>
        </HeadRight>
      </Header>

      <Ribbon>
        <Group $w={145}>
          <GroupBody $pl={7}>
            <Large icon="paste" label="Paste" caret w={42} />
            <SmallCol $ml={4}>
              <Small icon="cut" label="Cut" />
              <Small icon="copy" label="Copy" />
              <Small icon="format" label="Copy Format" />
            </SmallCol>
          </GroupBody>
          <GroupLabel>Clipboard</GroupLabel>
        </Group>
        <Group $w={64}>
          <GroupBody $pl={6}>
            <SmallCol>
              <Small icon="undo" label="Undo" />
              <Small icon="redo" label="Redo" off />
            </SmallCol>
          </GroupBody>
          <GroupLabel>Undo</GroupLabel>
        </Group>
        <Group $w={58}>
          <GroupBody $pl={1}>
            <Large icon="fit" label="Fit to" line2="Window" w={56} />
          </GroupBody>
          <GroupLabel>Zoom</GroupLabel>
        </Group>
        <Group $w={204}>
          <GroupBody $pl={5} $gap={1}>
            <Large icon="arrow" label="Select" w={42} on />
            <SmallCol>
              <Small icon="selAll" label="Select All" />
              <Small icon="deselAll" label="Deselect All" />
              <Small icon="block" label="Block Select" />
            </SmallCol>
            <SmallCol $ml={2}>
              <Small icon="invert" label="Invert" />
              <Small icon="rename" label="Rename" />
              <Small icon="del" label="Delete" />
            </SmallCol>
          </GroupBody>
          <GroupLabel>Selection</GroupLabel>
        </Group>
        <Group $w={373}>
          <GroupBody $pl={5}>
            {newGraph.map(([icon, label, w, caret]) => (
              <Large key={icon} icon={icon} label={label} w={w} caret={!!caret} />
            ))}
            <Large icon="contour" label="Contour" line2="Surface" inlineCaret w={50} />
          </GroupBody>
          <GroupLabel>New Graph</GroupLabel>
        </Group>
        <Group $w={179}>
          <GroupBody $pl={5}>
            {addToGraph.map(([icon, label, caret]) => (
              <Large key={icon} icon={icon} label={label} caret={!!caret} />
            ))}
            <Large icon="fitcurve" label="Fit" line2="Curve" inlineCaret off />
          </GroupBody>
          <GroupLabel>Add to Graph</GroupLabel>
        </Group>
        <Group $w={177}>
          <GroupBody $pl={4}>
            {draw.map(([icon, label, caret]) => (
              <Large key={icon} icon={icon} label={label} caret={!!caret} />
            ))}
          </GroupBody>
          <GroupLabel>Draw</GroupLabel>
        </Group>
        <Group $w={81}>
          <GroupBody $pl={9}>
            <SmallCol>
              <Small icon="contents" label="Contents" />
              <Small icon="tutorial" label="Tutorial" />
            </SmallCol>
          </GroupBody>
          <GroupLabel>Help</GroupLabel>
        </Group>
      </Ribbon>

      <Main>
        <LeftPanel>
          <PanelHeader>
            Object Manager
            <PanelTools>
              <Glyph w={10} h={12} d="M3 1h4v5H3zM1 6.5h8M5 7v4" stroke="#6d7c8d" />
              <Glyph w={10} h={10} d="M1 1l8 8M9 1L1 9" stroke="#9aa7b5" />
            </PanelTools>
          </PanelHeader>
          <TreeBox>
            <TreeRow>
              <Expander />
              <TreeCheck><Check c="#5f9d3c" s={9} /></TreeCheck>
              <Svg s={16} v={32}><GridBase /><path d="M3 24l8-6 6 3 12-12" fill="none" stroke="#1f6fb0" strokeWidth="2.5" /></Svg>
              <TreeLabel $ml={-1}>Graph 1</TreeLabel>
            </TreeRow>
            <TreeChildren>
              <TreeRow>
                <TreeCheck><Check c="#5f9d3c" s={9} /></TreeCheck>
                <Svg s={16} v={32}><GridBase /><path d="M8 4v22M17 6v22M26 4v20" stroke="#333" strokeWidth="2" /><rect x="4" y="10" width="8" height="10" fill="#3b8fd6" /><rect x="13" y="14" width="8" height="10" fill="#3b8fd6" /><rect x="22" y="8" width="8" height="10" fill="#3b8fd6" /></Svg>
                <TreeLabel $sel>Set_6</TreeLabel>
              </TreeRow>
              <TreeRow>
                <TreeCheck><Check c="#5f9d3c" s={9} /></TreeCheck>
                <Svg s={16} v={32}><path d="M6 2V26M16 2V26M26 2V26" stroke="#bbb" strokeWidth="2" /><path d="M2 29H30" stroke="#444" strokeWidth="2" strokeDasharray="2 2" /></Svg>
                <TreeLabel>Box Plot Axis 1</TreeLabel>
              </TreeRow>
              <TreeRow>
                <TreeCheck><Check c="#5f9d3c" s={9} /></TreeCheck>
                <Svg s={16} v={32}><path d="M6 4H30M6 14H30M6 24H30" stroke="#bbb" strokeWidth="2" /><path d="M3 2V30" stroke="#444" strokeWidth="2" strokeDasharray="2 2" /></Svg>
                <TreeLabel>Y Axis 1</TreeLabel>
              </TreeRow>
            </TreeChildren>
          </TreeBox>
          <PanelHeader $yellow>Property Manager - Set_6</PanelHeader>
          <PropTabs>
            <PropTab $w={47} $pl={6}>Plot</PropTab>
            <PropTab $w={74} $pl={6} $active>Data Limits</PropTab>
            <PropTab $w={46} $pl={3}>Labels</PropTab>
            <PropTab $w={48} $pl={5}>Symbol</PropTab>
          </PropTabs>
          <PropGrid>
            <PropHead $pl={2}>Data points count<HeadCount>(22)</HeadCount></PropHead>
            <PropHead><Minus />Worksheet range</PropHead>
            {worksheetRows.map(([label, value]) => (
              <PropRow key={label}><Gutter /><PropCell>{label}</PropCell><PropCell>{value}</PropCell></PropRow>
            ))}
            <PropHead><Minus />Criteria Filter</PropHead>
            <PropRow>
              <Gutter />
              <PropCell>Criteria</PropCell>
              <PropCell>
                None
                <CellButton $w={16} $ml={102}><Glyph w={9} h={6} d="M1 1l3.5 3.5L8 1" /></CellButton>
                <CellButton $w={33} $ml={1}>Set...</CellButton>
              </PropCell>
            </PropRow>
          </PropGrid>
          <DescBox>
            <DescTitle>Criteria</DescTitle>
            Choose a type of criteria to display for filtering plot values.
          </DescBox>
        </LeftPanel>

        <Workspace>
          <DocTabs>
            <ArrowBtn><Glyph w={6} h={10} d="M5 1L1 5l4 4z" stroke="#777" /></ArrowBtn>
            <Shaped $w={81} $clip={docClip} $fill="#fff" $bold $ml={4} $pl={18}>
              <span>Plot1 *</span>
              <Glyph w={10} h={10} d="M1 1l8 8M9 1L1 9" stroke="#888" />
            </Shaped>
            <Shaped $w={81} $clip={dataClip} $fill="linear-gradient(#d6e5f5, #bdd3ea)" $line="#6e8fb3"><span>box plot.dat</span></Shaped>
            <ArrowBtn $auto $mr={6}><Glyph w={6} h={10} d="M1 1l4 4-4 4z" stroke="#777" /></ArrowBtn>
          </DocTabs>
          <RulerRow>
            <RulerCorner />
            <HRuler />
          </RulerRow>
          <CanvasRow>
            <VRuler />
            <CanvasCol>
              <CanvasTop>
                <Chart />
                <VScroll>
                  <ScrollArrow><Glyph w={9} h={6} d="M1 5l3.5-3.5L8 5" sw={1.6} /></ScrollArrow>
                  <VThumb />
                  <ScrollArrow><Glyph w={9} h={6} d="M1 1l3.5 3.5L8 1" sw={1.6} /></ScrollArrow>
                </VScroll>
              </CanvasTop>
              <HScroll>
                <Glyph w={6} h={9} d="M5 1L1.5 4.5 5 8" sw={1.6} />
                <HThumb />
                <Glyph w={6} h={9} d="M1 1l3.5 3.5L1 8" sw={1.6} />
              </HScroll>
              <PageTabs>
                <ArrowBtn $w={15}><Glyph w={6} h={10} d="M5 1L1 5l4 4z" stroke="#888" /></ArrowBtn>
                <Shaped $w={80} $h={19} $clip={pageClip} $fill="#fff" $inset="0 1px 1px 1px" $line="#7d93ab" $pr={2} $gap={13}>
                  <span>Page 1</span>
                  <Glyph w={9} h={9} d="M1 1l7 7M8 1L1 8" stroke="#888" />
                </Shaped>
                <Shaped $w={28} $h={19} $clip={plusClip} $fill="#d3e1f1" $inset="0 1px 1px 1px" $line="#7d93ab"><span>+</span></Shaped>
                <ArrowBtn $auto $mr={6}><Glyph w={6} h={10} d="M1 1l4 4-4 4z" stroke="#888" /></ArrowBtn>
              </PageTabs>
            </CanvasCol>
          </CanvasRow>
        </Workspace>
      </Main>

      <StatusBar>
        Graph 1 selected
        <StatusCell $ml={975} $w={307}>x = -1.82 in, y = 5.24 in</StatusCell>
        <StatusCell $w={156}>Criteria : None</StatusCell>
      </StatusBar>

      <Dialog $x={185} $y={279} $w={404} $h={315}>
        <DlgTitle $h={30} $pr={17} $dim>
          Criteria
          <DlgHelp $dim $mr={28}>?</DlgHelp>
          <Glyph w={12} h={12} d="M1 1l10 10M11 1L1 11" stroke="#777" />
        </DlgTitle>
        <GroupGrid>
          <GroupBox>
            <GroupTitle>Exclude data</GroupTitle>
            <CheckRow><Box13 />Use NULL criteria</CheckRow>
            <ListBox />
            <CheckRow $mt={6} $off><Box13 $off><Check c="#aaa" /></Box13>Data columns only</CheckRow>
            <DlgButton $w={94} $off $mt={6} $small>Select columns...</DlgButton>
          </GroupBox>
          <GroupBox>
            <GroupTitle>Include data</GroupTitle>
            <CheckRow><Box13><Check /></Box13>Use column criteria</CheckRow>
            <IncludeButtons>
              <DlgButton $w={51} $h={18}>Add</DlgButton>
              <DlgButton $w={44} $h={18} $off $small>Delete</DlgButton>
            </IncludeButtons>
            <ComboBox>Column A: Set 1<Glyph w={10} h={6} d="M1 1l4 4 4-4" /></ComboBox>
          </GroupBox>
        </GroupGrid>
        <DlgFooter $pad="9px 22px 0 0">
          <DlgButton>OK</DlgButton>
          <DlgButton>Cancel</DlgButton>
          <DlgButton $ml={-1}>Apply</DlgButton>
        </DlgFooter>
      </Dialog>

      <Dialog $x={263} $y={368} $w={251} $h={138} $dark>
        <DlgTitle $h={29} $pr={17}>
          <svg width="16" height="13" viewBox="0 0 16 13"><rect x=".5" y=".5" width="15" height="12" fill="#dfe5ea" stroke="#999" /><rect x="2" y="2" width="6" height="9" fill="#3b8a78" /><rect x="10" y="2" width="4" height="9" fill="#fff" /></svg>
          Enter Criteria Value
          <DlgHelp $mr={33}>?</DlgHelp>
          <Glyph w={12} h={12} d="M1 1l10 10M11 1L1 11" stroke="#222" />
        </DlgTitle>
        <ValueBody>
          Value:
          <ValueInput>BH-1<TextCaret /></ValueInput>
          <DlgFooter $pad="12px 3px 0 0" $gap={9}>
            <DlgButton $focus>OK</DlgButton>
            <DlgButton>Cancel</DlgButton>
          </DlgFooter>
          <Grip><Glyph w={9} h={9} d="M7 1v1M4 4v1M7 4v1M1 7v1M4 7v1M7 7v1" stroke="#999" sw={1.5} /></Grip>
        </ValueBody>
      </Dialog>
    </Page>
  );
}
